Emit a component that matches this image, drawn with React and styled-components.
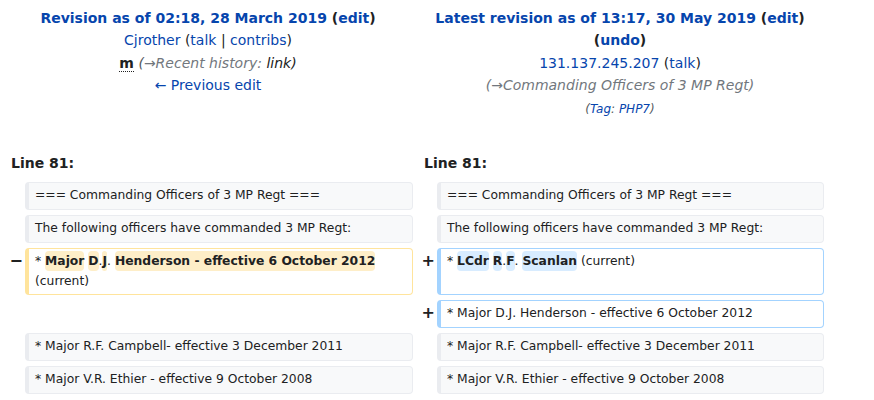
import styled, { createGlobalStyle } from "styled-components";

const GlobalStyle = createGlobalStyle`
  body {
    margin: 0;
    background: #fff;
    color: #202122;
    font-family: "DejaVu Sans", sans-serif;
  }
`;

const left = {
  title: "Revision as of 02:18, 28 March 2019",
};

const right = {
  title: "Latest revision as of 13:17, 30 May 2019",
};

function App() {
  return (
    <>
      <GlobalStyle />
      <DiffTable>
        <HeaderCell>
          <Line>
            <Strong>
              <Link>{left.title}</Link> (<Link>edit</Link>)
            </Strong>
          </Line>
          <Line>
            <Link>Cjrother</Link> (<Link>talk</Link> | <Link>contribs</Link>)
          </Line>
          <Line>
            <Minor title="This is a minor edit">m</Minor>{" "}
            <Comment>
              <Paren>(</Paren>
              <Auto>→Recent history: </Auto> link)
            </Comment>
          </Line>
          <Line>
            <Link>← Previous edit</Link>
          </Line>
        </HeaderCell>
        <HeaderCell>
          <Line>
            <Strong>
              <Link>{right.title}</Link> (<Link>edit</Link>)
            </Strong>
          </Line>
          <Line>
            <Strong>
              (<Link>undo</Link>)
            </Strong>
          </Line>
          <Line>
            <Link>131.137.245.207</Link> (<Link>talk</Link>)
          </Line>
          <Line>
            <Comment>
              <Auto>(→Commanding Officers of 3 MP Regt)</Auto>
            </Comment>
          </Line>
          <Line>
            <Tags>
              (<Link>Tag</Link>: <Link>PHP7</Link>)
            </Tags>
          </Line>
        </HeaderCell>

        <LineNo>Line 81:</LineNo>
        <LineNo>Line 81:</LineNo>

        <Marker />
        <Box>=== Commanding Officers of 3 MP Regt ===</Box>
        <Marker />
        <Box>=== Commanding Officers of 3 MP Regt ===</Box>

        <Marker />
        <Box>The following officers have commanded 3 MP Regt:</Box>
        <Marker />
        <Box>The following officers have commanded 3 MP Regt:</Box>

        <Marker>−</Marker>
        <Box $kind="del">
          * <Change $kind="del">Major</Change> <Change $kind="del">D</Change>.
          <Change $kind="del">J</Change>.{" "}
          <Change $kind="del">Henderson - effective 6 October 2012</Change>{" "}
          (current)
        </Box>
        <Marker>+</Marker>
        <Box $kind="add">
          * <Change $kind="add">LCdr</Change> <Change $kind="add">R</Change>.
          <Change $kind="add">F</Change>.{" "}
          <Change $kind="add">Scanlan</Change> (current)
        </Box>

        <Marker />
        <Empty />
        <Marker>+</Marker>
        <Box $kind="add">* Major D.J. Henderson - effective 6 October 2012</Box>

        <Marker />
        <Box>* Major R.F. Campbell- effective 3 December 2011</Box>
        <Marker />
        <Box>* Major R.F. Campbell- effective 3 December 2011</Box>

        <Marker />
        <Box>* Major V.R. Ethier - effective 9 October 2008</Box>
        <Marker />
        <Box>* Major V.R. Ethier - effective 9 October 2008</Box>
      </DiffTable>
    </>
  );
}

export default App;

const borders = {
  ctx: "#eaecf0",
  del: "#ffe49c",
  add: "#a3d3ff",
};

const DiffTable = styled.div`
  display: grid;
  grid-template-columns: 25px 388px 24px 387px;
  row-gap: 5px;
  padding-top: 7px;
`;

const HeaderCell = styled.div`
  grid-column: span 2;
  text-align: center;
  font-size: 14px;
  line-height: 22.4px;
  padding: 0 0 27px 3px;
`;

const Line = styled.div``;

const Strong = styled.span`
  font-weight: bold;
`;

const Link = styled.a`
  color: #0645ad;
  text-decoration: none;
  cursor: pointer;
`;

const Minor = styled.abbr`
  font-weight: bold;
  text-decoration: none;
  border-bottom: 1px dotted #202122;
`;

const Comment = styled.span`
  font-style: italic;
  color: #202122;
`;

const Paren = styled.span`
  color: #54595d;
`;

const Auto = styled.span`
  color: #72777d;
`;

const Tags = styled.span`
  font-size: 12px;
  font-style: italic;
  color: #54595d;
`;

const LineNo = styled.div`
  grid-column: span 2;
  font-size: 14px;
  font-weight: bold;
  line-height: 22.4px;
  padding: 0 0 3px 11px;
`;

const Marker = styled.div`
  font-size: 16px;
  font-weight: bold;
  text-align: right;
  padding: 0 2px 0 0;
  line-height: 26px;
`;

const Box = styled.div`
  box-sizing: border-box;
  font-size: 12.32px;
  line-height: 19.5px;
  padding: 3px 6px 3px 6px;
  border: 1px solid ${(p) => borders[p.$kind || "ctx"]};
  border-left-width: 4px;
  border-radius: 4px;
  background: ${(p) => (p.$kind ? "#fff" : "#f8f9fa")};
  color: #202122;
  min-height: 28px;
`;

const Empty = styled.div``;

const Change = styled.span`
  font-weight: bold;
  border-radius: 4px;
  padding: 3px 0;
  background: ${(p) => (p.$kind === "add" ? "#d8ecff" : "#feeec8")};
`;
